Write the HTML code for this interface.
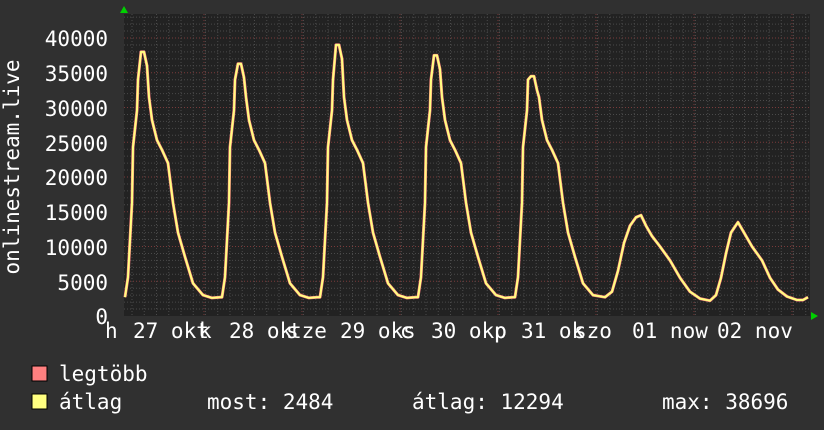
<!DOCTYPE html>
<html><head><meta charset="utf-8"><style>
html,body{margin:0;padding:0;background:#303030;}
svg{display:block}
text{font-family:"DejaVu Sans Mono","Liberation Mono",monospace;fill:#fff;font-size:21px}
</style></head><body>
<svg id="s" width="824" height="430" xmlns="http://www.w3.org/2000/svg">
<rect width="824" height="430" fill="#303030"/>
<rect x="124" y="14" width="686" height="302" fill="#222222"/>
<g id="grid"></g>
<polyline id="mx" fill="none" stroke="#ff8080" stroke-width="3" stroke-linejoin="round"/>
<polyline id="av" fill="none" stroke="#ffff80" stroke-width="2" stroke-linejoin="round"/>
<polygon points="120,13 128,13 124,6" fill="#00d000"/>
<polygon points="811,312 811,320 818,316" fill="#00d000"/>
<g text-anchor="end">
<text x="108" y="46">40000</text><text x="108" y="81">35000</text><text x="108" y="116">30000</text>
<text x="108" y="151">25000</text><text x="108" y="185">20000</text><text x="108" y="220">15000</text>
<text x="108" y="255">10000</text><text x="108" y="290">5000</text><text x="108" y="324">0</text>
</g>
<text transform="translate(19,167) rotate(-90)" text-anchor="middle">onlinestream.live</text>
<text x="105" y="338">h</text><text x="133" y="338">27 okt</text><text x="199" y="338">k</text>
<text x="229" y="338">28 ok</text><text x="286" y="338">s</text><text x="289" y="338">tze</text>
<text x="340" y="338">29 ok</text><text x="400" y="338">c</text><text x="403" y="338">s</text>
<text x="431" y="338">30 okp</text><text x="494" y="338">p</text>
<text x="521" y="338">31 ok</text><text x="574" y="338">szo</text>
<text x="632" y="338">01 now</text><text x="717" y="338">02 nov</text>
<rect x="32" y="366" width="15" height="15" fill="#ff8080" stroke="#000"/>
<rect x="32" y="394" width="15" height="15" fill="#ffff80" stroke="#000"/>
<text x="59" y="381">legtöbb</text>
<text x="59" y="409">átlag</text>
<text x="207" y="409">most: 2484</text>
<text x="412" y="409">átlag: 12294</text>
<text x="662" y="409">max: 38696</text>
</svg>
<script>
var g=document.getElementById('grid'),h='';
function Y(v){return 316-v*278/40000;}
for(var v=1000;v<=43000;v+=1000){var y=Y(v);if(y<14)break;var maj=v%5000==0;
h+='<line x1="124" x2="810" y1="'+y+'" y2="'+y+'" stroke="'+(maj?'#7a3a3a':'#4a4a4a')+'" stroke-dasharray="1,2"/>';}
for(var x=132;x<810;x+=12.25){h+='<line y1="14" y2="316" x1="'+x+'" x2="'+x+'" stroke="#4a4a4a" stroke-dasharray="1,2"/>';}
[204,302,400,498,596,694,792].forEach(function(x){h+='<line y1="14" y2="316" x1="'+x+'" x2="'+x+'" stroke="#7a3a3a" stroke-dasharray="1,2"/>';});
g.innerHTML=h;
var pts=[];
var peaks=[[143,38000],[240,36300],[338,39000],[436,37500],[533,34500]];
var sh=[[-18,2700],[-15,5600],[-11,16300],[-10,24300],[-6,29600],[-5,34000],[-2,0],[1,0],[4,-2000],[6,31500],[9,28200],[14,25300],[19,23900],[25,22000],[30,16300],[35,12000],[42,8500],[50,4700],[60,3000],[69,2600],[77,2700]];
peaks.forEach(function(q){var p=q[0],P=q[1];
sh.forEach(function(o){var x=p+o[0];var v=o[1]<=0?P+o[1]:o[1];if(x>=124&&x<600)pts.push([x,v]);});
});
[[605,2700],[612,3500],[618,6500],[624,10500],[630,13000],[636,14200],[641,14500],[646,13000],[652,11500],[660,10000],[670,8000],[680,5500],[690,3500],[700,2500],[710,2200],[716,3000],[721,5500],[726,9000],[731,12000],[738,13500],[744,12000],[752,10000],[762,8000],[770,5500],[778,3800],[787,2800],[797,2300],[803,2300],[808,2700]].forEach(function(o){pts.push(o);});
var s=pts.map(function(p){return p[0]+','+Y(p[1]).toFixed(1);}).join(' ');
document.getElementById('mx').setAttribute('points',s);
document.getElementById('av').setAttribute('points',s);
</script>
</body></html>
